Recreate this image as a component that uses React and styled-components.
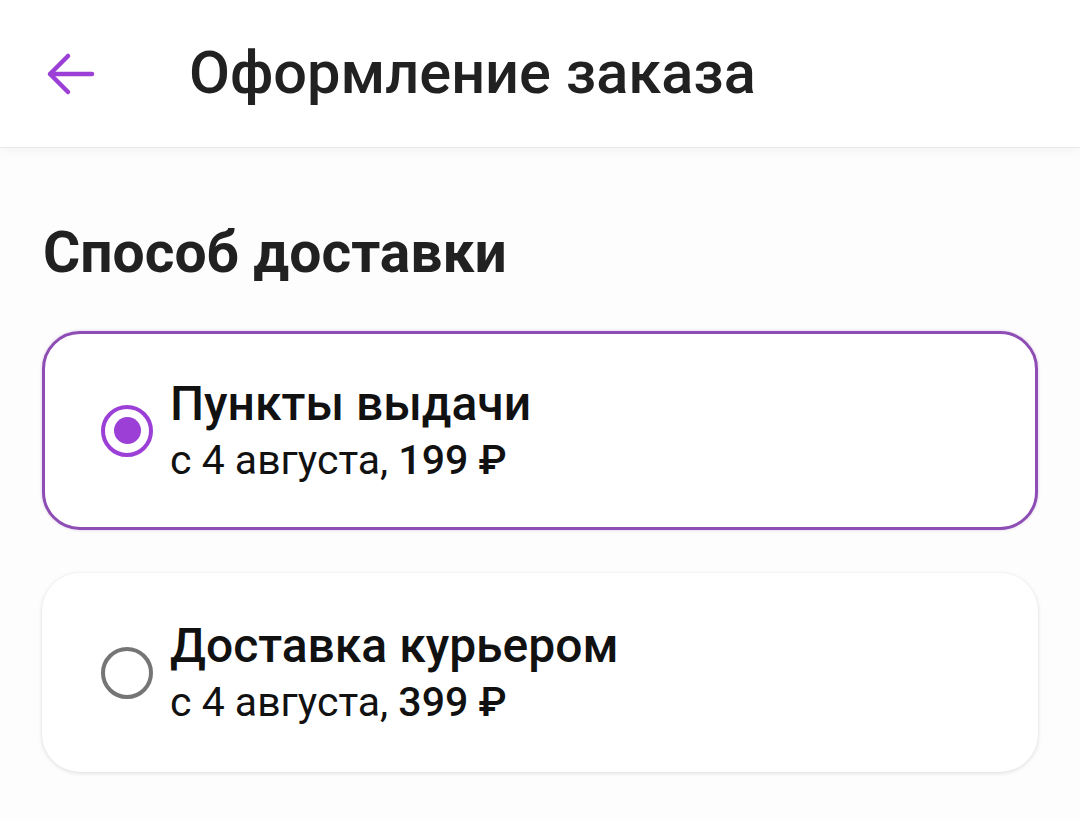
import React, { useState } from 'react';
import styled, { createGlobalStyle } from 'styled-components';

const GlobalStyle = createGlobalStyle`
  html, body {
    margin: 0;
    padding: 0;
    background: #fdfdfd;
    font-family: Roboto, 'Noto Sans', sans-serif;
    color: #212121;
  }
`;

const Page = styled.div`
  width: 1080px;
  min-height: 820px;
  background: #fdfdfd;
`;

const Header = styled.header`
  height: 147px;
  background: #fff;
  display: flex;
  align-items: center;
  padding-left: 44px;
  box-shadow: 0 1px 0 rgba(0, 0, 0, 0.05), 0 3px 12px rgba(0, 0, 0, 0.05);
  position: relative;
  z-index: 1;
  box-sizing: border-box;
`;

const BackButton = styled.button`
  width: 56px;
  height: 56px;
  padding: 0;
  border: 0;
  background: none;
  display: flex;
  align-items: center;
  justify-content: center;
  margin-right: 89px;
  cursor: pointer;
`;

const Title = styled.h1`
  margin: 0 0 2px;
  font-size: 59.5px;
  font-weight: 500;
  line-height: 70px;
  color: #212121;
`;

const Content = styled.main`
  padding: 74px 42px 0;
  display: flex;
  flex-direction: column;
`;

const SectionTitle = styled.h2`
  margin: 0 0 46px 1px;
  font-size: 57px;
  font-weight: 700;
  color: #212121;
  line-height: 64px;
`;

const Options = styled.div`
  display: flex;
  flex-direction: column;
  gap: 43px;
`;

const Card = styled.label`
  display: flex;
  align-items: center;
  height: 199px;
  box-sizing: border-box;
  background: #fff;
  border-radius: 38px;
  border: 3px solid ${({ $selected }) => ($selected ? '#8d4db4' : 'transparent')};
  box-shadow: ${({ $selected }) => ($selected
    ? '0 0 3px rgba(141, 77, 180, 0.35)'
    : '0 1px 4px rgba(0, 0, 0, 0.14)')};
  padding-left: 56px;
  cursor: pointer;
`;

const Radio = styled.span`
  flex: none;
  width: 52px;
  height: 52px;
  border-radius: 50%;
  box-sizing: border-box;
  border: 4.5px solid ${({ $checked }) => ($checked ? '#9b3fd6' : '#757575')};
  display: flex;
  align-items: center;
  justify-content: center;
  margin-right: 17px;

  &::after {
    content: '';
    width: 27px;
    height: 27px;
    border-radius: 50%;
    background: #9b3fd6;
    display: ${({ $checked }) => ($checked ? 'block' : 'none')};
  }
`;

const OptionText = styled.div`
  display: flex;
  flex-direction: column;
`;

const OptionName = styled.div`
  font-size: 48px;
  font-weight: 500;
  color: #111;
  line-height: 58px;
`;

const OptionInfo = styled.div`
  font-size: 41px;
  font-weight: 400;
  color: #111;
  line-height: 54px;

  b {
    font-weight: 500;
  }
`;

const ArrowIcon = () => (
  <svg width="52" height="44" viewBox="0 0 52 44" fill="none">
    <path
      d="M46 22H4M22 4L4 22L22 40"
      stroke="#9b3fd6"
      strokeWidth="4.5"
      strokeLinecap="round"
      strokeLinejoin="round"
    />
  </svg>
);

const options = [
  { id: 'pickup', name: 'Пункты выдачи', date: 'с 4 августа,', price: '199 ₽' },
  { id: 'courier', name: 'Доставка курьером', date: 'с 4 августа,', price: '399 ₽' },
];

const App = () => {
  const [selected, setSelected] = useState('pickup');

  return (
    <Page>
      <GlobalStyle />
      <Header>
        <BackButton aria-label="Назад">
          <ArrowIcon />
        </BackButton>
        <Title>Оформление заказа</Title>
      </Header>
      <Content>
        <SectionTitle>Способ доставки</SectionTitle>
        <Options>
          {options.map((opt) => (
            <Card
              key={opt.id}
              $selected={selected === opt.id}
              onClick={() => setSelected(opt.id)}
            >
              <Radio $checked={selected === opt.id} />
              <OptionText>
                <OptionName>{opt.name}</OptionName>
                <OptionInfo>
                  {opt.date} <b>{opt.price}</b>
                </OptionInfo>
              </OptionText>
            </Card>
          ))}
        </Options>
      </Content>
    </Page>
  );
};

export default App;
